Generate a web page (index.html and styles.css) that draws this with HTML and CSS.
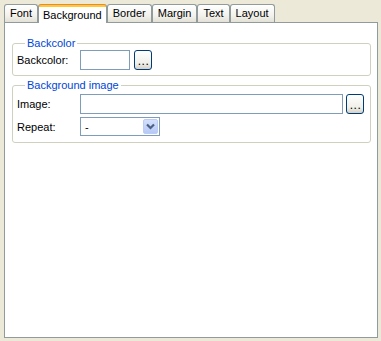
FILE: index.html
```html
<!DOCTYPE html>
<html lang="en">
<head>
  <meta charset="UTF-8">
  <title>Style Editor - Background</title>
  <link rel="stylesheet" href="styles.css">
</head>
<body>

<div class="window">
  <div class="tabs">
    <div class="tab">Font</div>
    <div class="tab active">Background</div>
    <div class="tab">Border</div>
    <div class="tab">Margin</div>
    <div class="tab">Text</div>
    <div class="tab">Layout</div>
  </div>

  <div class="panel">
    <fieldset class="group">
      <legend>Backcolor</legend>
      <div class="row">
        <label class="label" for="backColor">Backcolor:</label>
        <input type="text" id="backColor" class="field color-field">
        <button type="button" class="dots">...</button>
      </div>
    </fieldset>

    <fieldset class="group group-image">
      <legend>Background image</legend>
      <div class="row">
        <label class="label" for="bgImage">Image:</label>
        <input type="text" id="bgImage" class="field image-field">
        <button type="button" class="dots">...</button>
      </div>
      <div class="row">
        <label class="label">Repeat:</label>
        <div class="select">
          <span class="select-value">-</span>
          <span class="select-arrow">
            <svg viewBox="0 0 9 7" width="9" height="7">
              <path d="M1 1.5l3.5 3.5L8 1.5" fill="none" stroke="#4d6185" stroke-width="2.2"/>
            </svg>
          </span>
        </div>
      </div>
    </fieldset>
  </div>
</div>

</body>
</html>
```

FILE: styles.css
```css
  body {
    margin: 0;
    background-color: #ece9d8;
    font-family: "Liberation Sans", Arial, sans-serif;
    font-size: 11px;
    color: black;
  }

  .window {
    height: 341px;
    box-sizing: border-box;
    padding: 2px 3px 3px 4px;
    display: flex;
    flex-direction: column;
  }

  .tabs {
    display: flex;
    align-items: flex-end;
    height: 21px;
    margin-bottom: -1px;
  }

  .tab {
    height: 17px;
    line-height: 17px;
    margin-bottom: 1px;
    padding: 0 5px;
    border: 1px solid #919b9c;
    border-bottom: none;
    border-radius: 3px 3px 0 0;
    background: linear-gradient(#ffffff, #f3f2ed 60%, #e3e1d6);
  }

  .tab.active {
    position: relative;
    z-index: 1;
    height: 18px;
    line-height: 20px;
    margin-bottom: 0;
    padding: 0 4px;
    border-top: 1px solid #e68b2c;
    background: linear-gradient(#ffc83c 0, #ffc83c 2px, #ffffff 2px);
  }

  .panel {
    flex: 1;
    background: #fff;
    border: 1px solid #919b9c;
    padding: 14px 6px 0 7px;
  }

  .group {
    margin: 0 0 3px 0;
    padding: 0 6px 5px 4px;
    border: 1px solid #d0d0bf;
    border-radius: 3px;
    min-width: 0;
  }

  .group legend {
    color: #0046d5;
    padding: 0 2px;
    margin-left: 8px;
    line-height: 13px;
  }

  .group-image {
    padding-top: 2px;
    padding-bottom: 6px;
    display: flex;
    flex-direction: column;
    gap: 3px;
  }

  .row {
    display: flex;
    align-items: center;
  }

  .label {
    width: 63px;
    flex-shrink: 0;
  }

  .field {
    box-sizing: border-box;
    height: 20px;
    border: 1px solid #7f9db9;
    padding: 0 3px;
    font: inherit;
    outline: none;
  }

  .color-field {
    width: 50px;
  }

  .image-field {
    flex: 1;
    min-width: 0;
  }

  .dots {
    box-sizing: border-box;
    width: 18px;
    height: 20px;
    margin-left: 4px;
    padding: 2px 0 0 1px;
    border: 1px solid #003c74;
    border-radius: 3px;
    background: linear-gradient(#ffffff, #f0efe8 70%, #d6d0c5);
    font: inherit;
    font-size: 12px;
    letter-spacing: 0.5px;
    line-height: 1;
    color: black;
  }

  .image-field + .dots {
    margin-left: 3px;
  }

  .select {
    box-sizing: border-box;
    width: 80px;
    height: 19px;
    border: 1px solid #7f9db9;
    display: flex;
    align-items: center;
    justify-content: space-between;
    padding: 0 1px 0 4px;
    background: #fff;
  }

  .select-arrow {
    box-sizing: border-box;
    width: 15px;
    height: 15px;
    border: 1px solid #bacdf7;
    border-radius: 2px;
    background: linear-gradient(#d4e0fc, #b7c9f5);
    display: flex;
    align-items: center;
    justify-content: center;
  }
```
